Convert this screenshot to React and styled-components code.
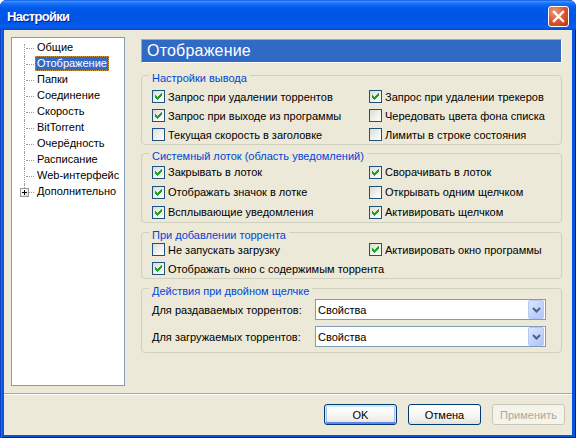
import React from 'react';
import styled, { createGlobalStyle } from 'styled-components';

const Global = createGlobalStyle`
  html, body { margin: 0; padding: 0; background: #ffffff; }
  body { font-family: "Liberation Sans", Arial, sans-serif; font-size: 11px; color: #000; }
  * { box-sizing: border-box; }
`;

const Window = styled.div`
  width: 576px;
  height: 438px;
  display: flex;
  flex-direction: column;
  background: #0855DD;
  border-radius: 7px 7px 0 0;
  overflow: hidden;
  box-shadow: inset 1px 0 0 #0A3FC4, inset 2px 0 0 #1D6DF2, inset -1px 0 0 #001C9A, inset 0 -1px 0 #001C9A;
`;

const TitleBar = styled.div`
  height: 30px;
  flex: none;
  display: flex;
  align-items: flex-start;
  justify-content: space-between;
  padding: 6px 7px 0 7px;
  background: linear-gradient(180deg, #0B5DEA 0%, #3C8EFB 5%, #1770F6 12%, #0059EC 28%, #0055E4 55%, #0056E8 78%, #0A5EF2 90%, #0447CF 100%);
`;

const Title = styled.span`
  font-family: "Liberation Sans", Arial, sans-serif;
  font-weight: bold;
  font-size: 13px;
  letter-spacing: -0.7px;
  line-height: 21px;
  color: #ffffff;
  text-shadow: 1px 1px 0 #0A1A8C;
`;

const CloseButton = styled.div`
  width: 21px;
  height: 21px;
  border: 1px solid #ffffff;
  border-radius: 3px;
  background: radial-gradient(circle at 30% 25%, #EC9A7E 0%, #DD5A36 45%, #C9401A 80%, #B73310 100%);
  display: flex;
  align-items: center;
  justify-content: center;
`;

const Client = styled.div`
  flex: 1;
  margin: 0 4px 3px 4px;
  background: #ECE9D8;
  display: flex;
  flex-direction: column;
`;

const Main = styled.div`
  display: flex;
  gap: 16px;
  padding: 7px 10px 0 7px;
  height: 356px;
`;

const Tree = styled.div`
  width: 114px;
  height: 349px;
  flex: none;
  border: 1px solid #7F9DB9;
  background: #ffffff;
  padding-top: 2px;
`;

const TreeRow = styled.div`
  display: flex;
  height: 16px;
  align-items: flex-start;
`;

const Connector = styled.span`
  position: relative;
  width: 23px;
  height: 16px;
  flex: none;
  &::before {
    content: '';
    position: absolute;
    left: 12px;
    top: ${p => (p.$first ? '4px' : '0')};
    height: ${p => (p.$first ? '12px' : p.$last ? '8px' : '16px')};
    border-left: 1px dotted #9C9C9C;
  }
  &::after {
    content: '';
    position: absolute;
    left: 14px;
    width: 8px;
    top: 8px;
    border-top: 1px dotted #9C9C9C;
  }
`;

const Expander = styled.span`
  position: absolute;
  left: 8px;
  top: 4px;
  width: 9px;
  height: 9px;
  border: 1px solid #919B9C;
  background: linear-gradient(135deg, #ffffff 0%, #F0EFE8 60%, #D8D5C6 100%);
  z-index: 1;
  &::before {
    content: '';
    position: absolute;
    left: 1px;
    top: 3px;
    width: 5px;
    height: 1px;
    background: #000;
  }
  &::after {
    content: '';
    position: absolute;
    left: 3px;
    top: 1px;
    width: 1px;
    height: 5px;
    background: #000;
  }
`;

const TreeLabel = styled.span`
  height: 15px;
  line-height: 15px;
  padding: 0 2px;
  white-space: nowrap;
  color: ${p => (p.$selected ? '#ffffff' : '#000000')};
  background: ${p => (p.$selected ? '#316AC5' : 'transparent')};
  outline: ${p => (p.$selected ? '1px dotted #CE953A' : 'none')};
  outline-offset: -1px;
`;

const Panel = styled.div`
  width: 421px;
  flex: none;
  padding-top: 2px;
  display: flex;
  flex-direction: column;
`;

const Header = styled.div`
  height: 24px;
  display: flex;
  align-items: center;
  padding-left: 5px;
  background: #316AC5;
  color: #ffffff;
  font-size: 16px;
  letter-spacing: 0.2px;
  border: 1px solid;
  border-color: #ACA899 #ffffff #ffffff #ACA899;
`;

const Group = styled.div`
  position: relative;
  margin-top: ${p => p.$mt}px;
  padding: ${p => p.$pt}px 15px ${p => p.$pb}px 10px;
  border: 1px solid #D0D0BF;
  border-radius: 4px;
`;

const Legend = styled.span`
  position: absolute;
  top: -4px;
  left: 7px;
  padding: 0 3px;
  line-height: 13px;
  background: #ECE9D8;
  color: #0046D5;
  white-space: nowrap;
`;

const CheckGrid = styled.div`
  display: grid;
  grid-template-columns: 217px 1fr;
  grid-auto-rows: ${p => p.$rowH}px;
`;

const CheckItem = styled.label`
  display: flex;
  align-items: center;
  gap: 3px;
  white-space: nowrap;
  grid-column: ${p => (p.$wide ? '1 / span 2' : 'auto')};
`;

const Box = styled.span`
  width: 13px;
  height: 13px;
  flex: none;
  border: 1px solid #1C5180;
  background: linear-gradient(135deg, #DCDCD7 0%, #F2F2EE 60%, #FFFFFF 100%);
  display: flex;
  align-items: center;
  justify-content: center;
`;

const SelectGrid = styled.div`
  display: grid;
  grid-template-columns: 163px 231px;
  row-gap: 6px;
  align-items: center;
`;

const FieldLabel = styled.span`
  white-space: nowrap;
`;

const Combo = styled.div`
  height: 21px;
  border: 1px solid #7F9DB9;
  background: #ffffff;
  display: flex;
  align-items: center;
  padding-left: 2px;
`;

const ComboValue = styled.span`
  flex: 1;
`;

const ComboArrow = styled.span`
  width: 16px;
  height: 19px;
  margin-right: 1px;
  border: 1px solid #B6C9F6;
  border-radius: 2px;
  background: linear-gradient(135deg, #DCE7FE 0%, #C4D5FC 50%, #B1C5F5 100%);
  display: flex;
  align-items: center;
  justify-content: center;
`;

const Separator = styled.div`
  margin-top: 7px;
  height: 2px;
  border-top: 1px solid #ACA899;
  border-bottom: 1px solid #ffffff;
`;

const ButtonBar = styled.div`
  display: flex;
  justify-content: flex-end;
  gap: 11px;
  padding: 9px 7px 10px 7px;
`;

const Button = styled.div`
  width: 73px;
  height: 21px;
  display: flex;
  align-items: center;
  justify-content: center;
  border: 1px solid ${p => (p.$disabled ? '#C9C7BA' : '#003C74')};
  border-radius: 3px;
  color: ${p => (p.$disabled ? '#ACA899' : '#000000')};
  background: ${p => (p.$disabled
    ? '#F5F4EA'
    : 'linear-gradient(180deg, #FFFFFF 0%, #FAFAF7 40%, #F0EFEA 75%, #E3E1D7 100%)')};
  box-shadow: ${p => (p.$default
    ? 'inset 0 1px 0 1px #CEE7FF, inset 0 -1px 0 1px #6982EE, inset 0 0 0 2px #A8C2F0'
    : 'none')};
`;

const checkPixels = ['......X', '.....XX', 'X...XXX', 'XX.XXX.', 'XXXXX..', '.XXX...', '..X....'];

function CheckMark() {
  const rects = [];
  checkPixels.forEach((row, y) =>
    [...row].forEach((c, x) => {
      if (c === 'X') rects.push(<rect key={`${x}-${y}`} x={x} y={y} width="1" height="1" />);
    })
  );
  return (
    <svg width="7" height="7" viewBox="0 0 7 7" fill="#21A121" shapeRendering="crispEdges">
      {rects}
    </svg>
  );
}

function Check({ label, checked, wide }) {
  return (
    <CheckItem $wide={wide}>
      <Box>{checked && <CheckMark />}</Box>
      {label}
    </CheckItem>
  );
}

function Select({ value }) {
  return (
    <Combo>
      <ComboValue>{value}</ComboValue>
      <ComboArrow>
        <svg width="9" height="6" viewBox="0 0 9 6">
          <polyline points="1,1 4.5,4.5 8,1" fill="none" stroke="#4D6185" strokeWidth="2" />
        </svg>
      </ComboArrow>
    </Combo>
  );
}

const treeItems = [
  'Общие',
  'Отображение',
  'Папки',
  'Соединение',
  'Скорость',
  'BitTorrent',
  'Очерёдность',
  'Расписание',
  'Web-интерфейс',
  'Дополнительно',
];

const groups = [
  {
    title: 'Настройки вывода', mt: 12, pt: 11, pb: 0, rowH: 19,
    items: [
      ['Запрос при удалении торрентов', true],
      ['Запрос при удалении трекеров', true],
      ['Запрос при выходе из программы', true],
      ['Чередовать цвета фона списка', false],
      ['Текущая скорость в заголовке', false],
      ['Лимиты в строке состояния', false],
    ],
  },
  {
    title: 'Системный лоток (область уведомлений)', mt: 8, pt: 8, pb: 0, rowH: 20,
    items: [
      ['Закрывать в лоток', true],
      ['Сворачивать в лоток', true],
      ['Отображать значок в лотке', true],
      ['Открывать одним щелчком', false],
      ['Всплывающие уведомления', true],
      ['Активировать щелчком', true],
    ],
  },
  {
    title: 'При добавлении торрента', mt: 9, pt: 7, pb: 0, rowH: 19,
    items: [
      ['Не запускать загрузку', false],
      ['Активировать окно программы', true],
      ['Отображать окно с содержимым торрента', true, true],
    ],
  },
];

export default function App() {
  return (
    <>
      <Global />
      <Window>
        <TitleBar>
          <Title>Настройки</Title>
          <CloseButton>
            <svg width="13" height="13" viewBox="0 0 13 13">
              <path d="M2 2 L11 11 M11 2 L2 11" stroke="#ffffff" strokeWidth="2.4" strokeLinecap="square" />
            </svg>
          </CloseButton>
        </TitleBar>
        <Client>
          <Main>
            <Tree>
              {treeItems.map((item, i) => {
                const last = i === treeItems.length - 1;
                return (
                  <TreeRow key={item}>
                    <Connector $first={i === 0} $last={last}>
                      {last && <Expander />}
                    </Connector>
                    <TreeLabel $selected={i === 1}>{item}</TreeLabel>
                  </TreeRow>
                );
              })}
            </Tree>
            <Panel>
              <Header>Отображение</Header>
              {groups.map(g => (
                <Group key={g.title} $mt={g.mt} $pt={g.pt} $pb={g.pb}>
                  <Legend>{g.title}</Legend>
                  <CheckGrid $rowH={g.rowH}>
                    {g.items.map(([label, checked, wide]) => (
                      <Check key={label} label={label} checked={checked} wide={wide} />
                    ))}
                  </CheckGrid>
                </Group>
              ))}
              <Group $mt={9} $pt={10} $pb={5}>
                <Legend>Действия при двойном щелчке</Legend>
                <SelectGrid>
                  <FieldLabel>Для раздаваемых торрентов:</FieldLabel>
                  <Select value="Свойства" />
                  <FieldLabel>Для загружаемых торрентов:</FieldLabel>
                  <Select value="Свойства" />
                </SelectGrid>
              </Group>
            </Panel>
          </Main>
          <Separator />
          <ButtonBar>
            <Button $default>OK</Button>
            <Button>Отмена</Button>
            <Button $disabled>Применить</Button>
          </ButtonBar>
        </Client>
      </Window>
    </>
  );
}
